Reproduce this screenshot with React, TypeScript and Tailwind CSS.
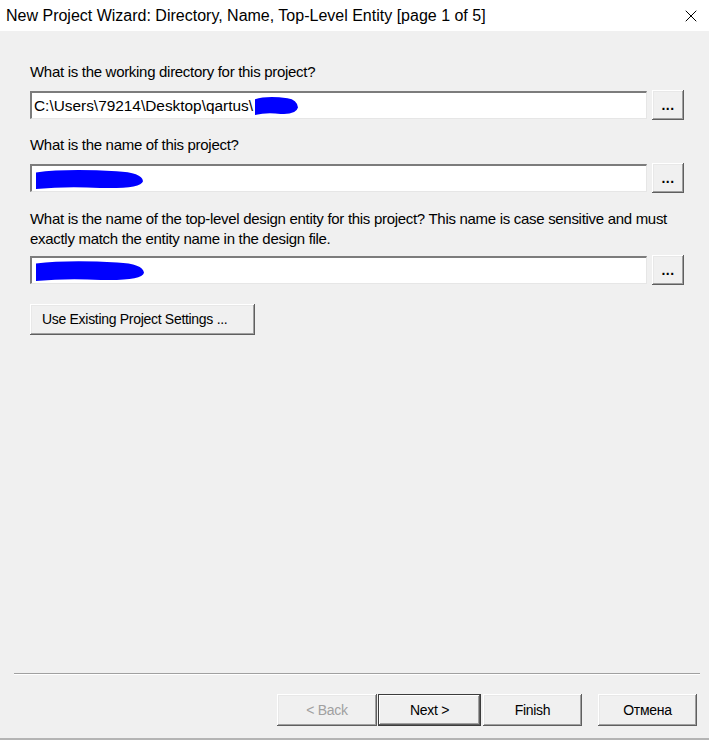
import { X } from "lucide-react";

const sunken =
  "bg-white border-t-2 border-l-2 border-t-[#7c7c7c] border-l-[#7c7c7c] border-r border-b border-r-[#e6e6e6] border-b-[#e6e6e6]";
const raised =
  "bg-[#f0f0f0] shadow-[inset_-1px_-1px_#5f5f5f,inset_1px_1px_#ffffff,inset_-2px_-2px_#a0a0a0,inset_2px_2px_#e8e8e8]";

function Scribble({ w, h }: { w: number; h: number }) {
  return (
    <svg width={w} height={h} viewBox={`0 0 ${w} ${h}`} className="block">
      <path
        d={`M2 ${h * 0.2} Q ${w * 0.3} ${h * 0.02} ${w * 0.75} ${h * 0.15} Q ${w - 2} ${h * 0.2} ${w - 1} ${h * 0.6} Q ${w - 3} ${h - 1} ${w * 0.6} ${h - 2} Q ${w * 0.3} ${h - 4} 2 ${h - 1} Z`}
        fill="#0000ff"
      />
    </svg>
  );
}

function BrowseButton() {
  return (
    <button className={`${raised} w-[32px] h-[30px] ml-[5px] flex items-end justify-center pb-[8px] text-[14px] font-bold leading-none tracking-[0.5px] text-black`}>
      ...
    </button>
  );
}

function Field({ children }: { children?: React.ReactNode }) {
  return (
    <div className="flex items-center">
      <div className={`${sunken} flex-1 h-[28px] flex items-center pl-[2px] overflow-hidden`}>{children}</div>
      <BrowseButton />
    </div>
  );
}

export default function App() {
  return (
    <div
      className="w-[709px] h-[740px] flex flex-col bg-[#f0f0f0] text-black"
      style={{ fontFamily: '"Liberation Sans", Arial, sans-serif' }}
    >
      {/* Title bar */}
      <div className="h-[31px] bg-white flex items-center justify-between pl-[6px] pr-[8px]">
        <span className="text-[16px] text-black">
          New Project Wizard: Directory, Name, Top-Level Entity [page 1 of 5]
        </span>
        <X size={20} strokeWidth={1.2} className="text-black" />
      </div>

      {/* Content */}
      <div className="flex-1 pl-[30px] pr-[25px] pt-[33px] text-[15px] tracking-[-0.3px]">
        <div className="leading-[16px]">What is the working directory for this project?</div>
        <div className="mt-[10px]">
          <Field>
            <span className="leading-none text-[15.4px] tracking-[0px]">C:\Users\79214\Desktop\qartus\</span>
            <Scribble w={46} h={21} />
          </Field>
        </div>

        <div className="mt-[17px] leading-[16px]">What is the name of this project?</div>
        <div className="mt-[10px]">
          <Field>
            <Scribble w={110} h={22} />
          </Field>
        </div>

        <div className="mt-[16px] leading-[20px] whitespace-nowrap">
          What is the name of the top-level design entity for this project? This name is case sensitive and must
          <br />
          exactly match the entity name in the design file.
        </div>
        <div className="mt-[6px]">
          <Field>
            <Scribble w={111} h={23} />
          </Field>
        </div>

        <button className={`${raised} mt-[19px] w-[225px] h-[31px] text-[14px] tracking-[-0.3px] flex items-center pl-[12px]`}>
          Use Existing Project Settings ...
        </button>
      </div>

      {/* Separator */}
      <div className="mx-[14px] mr-[9px] h-[2px] border-t border-[#a0a0a0] border-b border-b-white" />

      {/* Footer */}
      <div className="h-[63px] flex items-start pt-[19px] pr-[12px] justify-end text-[14px] tracking-[-0.3px]">
        <button className={`${raised} w-[100px] h-[32px] text-[#a0a0a0]`}>&lt; Back</button>
        <button className="ml-[1px] w-[103px] h-[32px] border border-[#3c3c3c] bg-[#f0f0f0] shadow-[inset_-1px_-1px_#5f5f5f,inset_1px_1px_#ffffff,inset_-2px_-2px_#a0a0a0]">
          Next &gt;
        </button>
        <button className={`${raised} ml-[2px] w-[99px] h-[32px]`}>Finish</button>
        <button className={`${raised} ml-[16px] w-[99px] h-[32px]`}>Отмена</button>
      </div>
      <div className="h-[2px] bg-[#b4b4b4]" />
    </div>
  );
}
